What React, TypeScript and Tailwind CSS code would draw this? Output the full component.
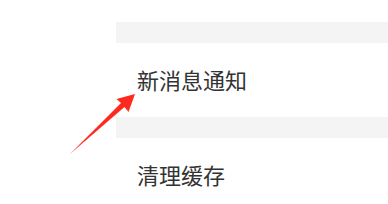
export default function App() {
  return (
    <div className="relative h-[204px] w-[388px] overflow-hidden bg-white" style={{ fontFamily: '"Noto Sans CJK SC", "Noto Sans", sans-serif' }}>
      <div className="h-[22px]" />
      <div className="ml-[116px]">
        <div className="h-[21px] bg-[#f4f4f4]" />
        <div className="flex h-[74px] items-center pb-[2px] pl-[21px] text-[22px] text-[#333333]">新消息通知</div>
        <div className="h-[21px] bg-[#f4f4f4]" />
        <div className="flex h-[74px] items-center pb-[2px] pl-[21px] text-[22px] text-[#333333]">清理缓存</div>
      </div>
      <svg className="absolute left-0 top-0" width="388" height="204" viewBox="0 0 388 204">
        <polygon points="135,94 116.5,99 121,103 70,154 124.5,107 128.5,112" fill="#ff2a1f" />
      </svg>
    </div>
  );
}
